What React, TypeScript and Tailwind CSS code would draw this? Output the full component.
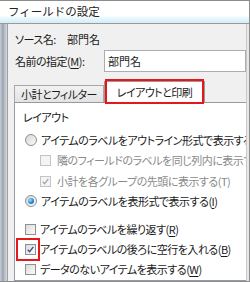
import React from 'react'

const jp = "font-['Noto_Sans_CJK_JP','Noto_Sans',sans-serif] [font-feature-settings:'palt']"

function Radio({ checked }: { checked?: boolean }) {
  return (
    <span className="relative flex h-[12px] w-[12px] shrink-0 items-center justify-center rounded-full border border-[#8e8f8f] bg-gradient-to-br from-[#d6d6d6] to-[#fbfbfb]">
      {checked && (
        <span className="h-[6px] w-[6px] rounded-full bg-[radial-gradient(circle_at_35%_35%,#9fe0ff,#1f7fd0_60%,#0b4f9a)]" />
      )}
    </span>
  )
}

function Check({ checked, disabled }: { checked?: boolean; disabled?: boolean }) {
  return (
    <span
      className={`flex h-[11px] w-[11px] shrink-0 items-center justify-center border ${
        disabled ? 'border-[#c3c3c3] bg-[#f4f4f4]' : 'border-[#8f8f8f] bg-gradient-to-br from-[#dcdcdc] to-[#fafafa]'
      }`}
    >
      {checked && (
        <svg viewBox="0 0 10 10" className="h-[9px] w-[9px]">
          <path
            d="M2 5.2 L4 7.4 L8.2 2"
            fill="none"
            stroke={disabled ? '#a8a8a8' : '#3a4f8a'}
            strokeWidth="1.5"
          />
        </svg>
      )}
    </span>
  )
}

function Key({ k }: { k: string }) {
  return (
    <>
      (<span className="underline underline-offset-2">{k}</span>)
    </>
  )
}

export default function App() {
  return (
    <div className={`relative h-[282px] w-[250px] overflow-hidden border-y border-r border-[#8c8c8c] bg-[#f0f0f0] text-[11px] tracking-[-0.5px] text-[#1a1a1a] ${jp}`}>
      {/* Title bar */}
      <div className="flex h-[23px] items-center border-b border-[#9a9a9a] bg-[linear-gradient(to_bottom,#ffffff_0%,#ffffff_65%,#e4f6fd_82%,#d3edf7_100%)] pl-[8px] text-[11.5px] tracking-normal text-[#222] [font-feature-settings:normal]">
        フィールドの設定
      </div>

      <div className="flex h-[257px]">
        {/* window behind */}
        <div className="w-[7px] shrink-0 bg-[linear-gradient(to_right,#c9cdd2,#9aa6b3_40%,#d7dadd)]" />
        <div className="flex min-w-0 flex-1 flex-col border-l border-[#a0a0a0] pl-[6px]">
          <div className="mt-[5px] flex h-[20px] items-center pl-[1px]">
            <span className="w-[52px]">ソース名:</span>
            <span className="tracking-normal">部門名</span>
          </div>
          <div className="mt-[1px] flex h-[22px] items-center pl-[1px]">
            <span className="w-[89px]">
              名前の指定<Key k="M" />:
            </span>
            <div className="flex h-[22px] flex-1 items-center border border-[#abadb3] bg-white pl-[3px] tracking-normal">部門名</div>
          </div>

          {/* Tabs */}
          <div className="mt-[7px] flex h-[23px] items-end">
            <div className="flex h-[17px] w-[90px] items-center justify-center border border-b-0 border-[#a8a8a8] bg-gradient-to-b from-[#f2f2f2] to-[#e3e3e3]">
              小計とフィルター
            </div>
            <div className="relative z-10 -mb-px flex h-[22px] w-[101px] items-center justify-center border border-b-0 border-[#9a9a9a] bg-white">
              レイアウトと印刷
              <span className="absolute left-[0px] top-[-3px] h-[25px] w-[99px] border-2 border-[#e8151b]" />
            </div>
          </div>

          {/* Panel */}
          <div className="flex-1 overflow-hidden whitespace-nowrap border border-r-0 border-[#979aa2] bg-white pl-[8px] pt-[5px]">
            <div className="flex h-[18px] items-center">レイアウト</div>
            <div className="mt-[4px] flex h-[20px] items-center gap-[4px] pl-[2px]">
              <Radio />
              <span>アイテムのラベルをアウトライン形式で表示する</span>
            </div>
            <div className="flex h-[21px] items-center gap-[6px] pl-[17px] text-[#8a8a8a]">
              <Check disabled />
              <span>隣のフィールドのラベルを同じ列内に表示する</span>
            </div>
            <div className="flex h-[20px] items-center gap-[6px] pl-[17px] text-[#8a8a8a]">
              <Check checked disabled />
              <span>小計を各グループの先頭に表示する(T)</span>
            </div>
            <div className="flex h-[20px] items-center gap-[4px] pl-[2px]">
              <Radio checked />
              <span>
                アイテムのラベルを表形式で表示する<Key k="I" />
              </span>
            </div>
            <div className="mt-[8px] flex h-[20px] items-center gap-[4px] pl-[2px]">
              <Check />
              <span>
                アイテムのラベルを繰り返す<Key k="R" />
              </span>
            </div>
            <div className="flex h-[20px] items-center gap-[4px] pl-[2px]">
              <span className="relative flex">
                <Check checked />
                <span className="absolute left-[-9px] top-[-6px] h-[23px] w-[24px] border-2 border-[#e8151b]" />
              </span>
              <span>
                アイテムのラベルの後ろに空行を入れる<Key k="B" />
              </span>
            </div>
            <div className="flex h-[20px] items-center gap-[4px] pl-[2px]">
              <Check />
              <span>
                データのないアイテムを表示する<Key k="W" />
              </span>
            </div>
          </div>
        </div>
        <div className="w-[3px] shrink-0 border-l border-[#c8c8c8] bg-[#e8e8e8]" />
      </div>
    </div>
  )
}
